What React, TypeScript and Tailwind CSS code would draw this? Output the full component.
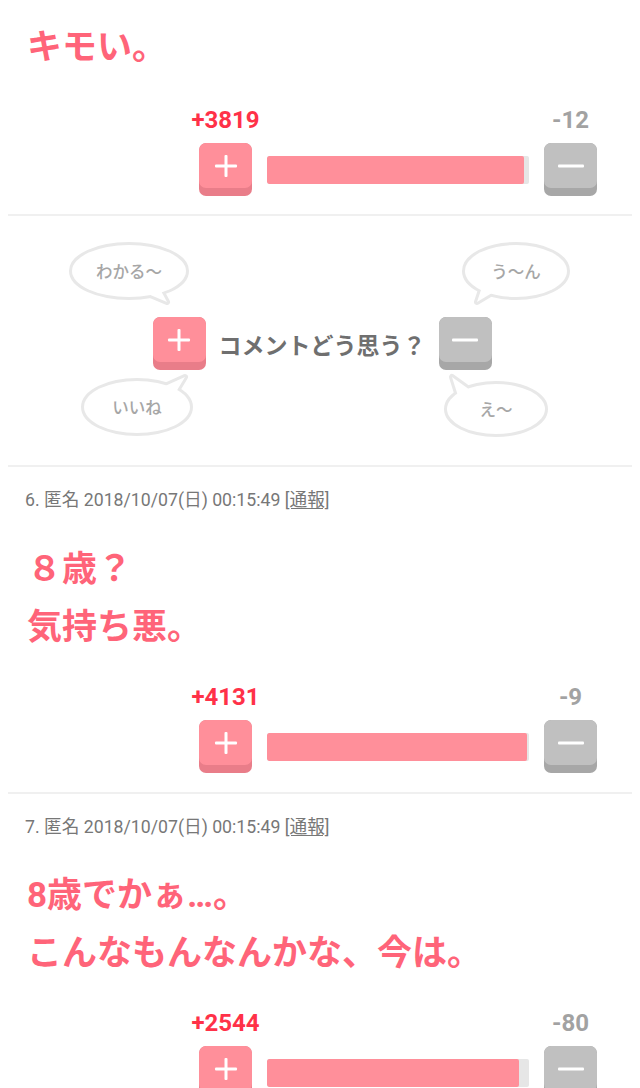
import React from "react";

const PlusIcon = () => (
  <svg width="24" height="24" viewBox="0 0 24 24">
    <rect x="10.5" y="1" width="3" height="22" rx="1" fill="#fff" />
    <rect x="1" y="10.5" width="22" height="3" rx="1" fill="#fff" />
  </svg>
);

const MinusIcon = () => (
  <svg width="26" height="4" viewBox="0 0 26 4">
    <rect x="0" y="0.5" width="26" height="3" rx="1" fill="#fff" />
  </svg>
);

const PlusButton = () => (
  <div className="flex h-[53px] w-[53px] shrink-0 flex-col overflow-hidden rounded-[7px] bg-[#e97d89]">
    <div className="flex h-[45px] items-center justify-center rounded-[7px] bg-[#ff8f9a]">
      <PlusIcon />
    </div>
  </div>
);

const MinusButton = () => (
  <div className="flex h-[53px] w-[53px] shrink-0 flex-col overflow-hidden rounded-[7px] bg-[#a7a7a7]">
    <div className="flex h-[45px] items-center justify-center rounded-[7px] bg-[#c0c0c0]">
      <MinusIcon />
    </div>
  </div>
);

const VoteBar = ({ plus, minus, fill }: { plus: string; minus: string; fill: number }) => (
  <div className="flex justify-end pr-[43px]">
    <div className="w-[398px]">
      <div className="flex h-[24px] justify-between font-['Roboto',sans-serif] text-[24px] font-bold leading-[24px]">
        <div className="flex w-[53px] justify-center whitespace-nowrap text-[#ff3148]">{plus}</div>
        <div className="flex w-[53px] justify-center whitespace-nowrap text-[#a2a2a2]">{minus}</div>
      </div>
      <div className="mt-[11px] flex items-center">
        <PlusButton />
        <div className="mx-[15px] h-[28px] flex-1 overflow-hidden rounded-[2px] bg-[#e6e6e6]">
          <div className="h-full rounded-[2px] bg-[#ff8f9a]" style={{ width: `${fill}px` }} />
        </div>
        <MinusButton />
      </div>
    </div>
  </div>
);

const Divider = ({ className = "" }: { className?: string }) => (
  <div className={`mx-[8px] h-[2px] bg-[#f0f0f0] ${className}`} />
);

type BubbleProps = {
  left: number;
  top: number;
  w: number;
  h: number;
  tail: string;
  text: string;
};

const Bubble = ({ left, top, w, h, tail, text }: BubbleProps) => (
  <div className="absolute" style={{ left, top, width: w, height: h }}>
    <svg className="absolute left-0 top-0 overflow-visible" width={w} height={h} viewBox={`0 0 ${w} ${h}`}>
      <ellipse cx={w / 2} cy={h / 2} rx={w / 2} ry={h / 2} fill="#e8e8e8" stroke="#e8e8e8" strokeWidth="6" />
      <polygon points={tail} fill="#e8e8e8" stroke="#e8e8e8" strokeWidth="6" strokeLinejoin="round" />
      <ellipse cx={w / 2} cy={h / 2} rx={w / 2} ry={h / 2} fill="#fff" />
      <polygon points={tail} fill="#fff" strokeLinejoin="round" />
    </svg>
    <div className="relative flex h-full w-full items-center justify-center font-['Noto_Sans_CJK_JP',sans-serif] text-[16.5px] font-medium text-[#a6a6a6]">
      {text}
    </div>
  </div>
);

const Meta = ({ n }: { n: number }) => (
  <p className="pl-[25px] font-['Roboto','Noto_Sans_CJK_JP',sans-serif] text-[17.7px] leading-[24px] text-[#777]">
    {n}. 匿名 2018/10/07(日) 00:15:49 <span className="underline underline-offset-2">[通報]</span>
  </p>
);

const commentCls =
  "pl-[27px] font-['Roboto','Noto_Sans_CJK_JP',sans-serif] text-[35px] font-bold leading-[58px] text-[#ff6479]";

export default function App() {
  return (
    <div className="min-h-[1088px] w-[640px] overflow-hidden bg-white">
      {/* Section 1 */}
      <div className="pt-[19px]">
        <p className={commentCls}>キモい。</p>
        <div className="mt-[31px]">
          <VoteBar plus="+3819" minus="-12" fill={257} />
        </div>
        <Divider className="mt-[18px]" />
      </div>

      {/* Section 2: prompt */}
      <div className="relative flex h-[249px] items-center justify-center pl-[4px] pt-[6px]">
        <Bubble left={72} top={29} w={114} h={52} tail="76,49 88,44 95,57" text="わかる〜" />
        <Bubble left={465} top={29} w={102} h={52} tail="27,48 17,42 12,57" text="う〜ん" />
        <Bubble left={84} top={165} w={106} h={52} tail="81,5 92,11 101,-4" text="いいね" />
        <Bubble left={447} top={168} w={98} h={50} tail="11,12 23,6 5,-7" text="え〜" />
        <div className="relative flex items-center">
          <PlusButton />
          <span className="ml-[13px] mr-[13px] font-['Noto_Sans_CJK_JP',sans-serif] text-[23px] font-bold leading-[30px] text-[#6f6f6f]">
            コメントどう思う？
          </span>
          <MinusButton />
        </div>
      </div>
      <Divider />

      {/* Section 3 */}
      <div className="pt-[21px]">
        <Meta n={6} />
        <div className={`mt-[29px] ${commentCls}`}>
          <p>８歳？</p>
          <p>気持ち悪。</p>
        </div>
        <div className="mt-[28px]">
          <VoteBar plus="+4131" minus="-9" fill={260} />
        </div>
        <Divider className="mt-[19px]" />
      </div>

      {/* Section 4 */}
      <div className="pt-[21px]">
        <Meta n={7} />
        <div className={`mt-[28px] ${commentCls}`}>
          <p>8歳でかぁ…。</p>
          <p>こんなもんなんかな、今は。</p>
        </div>
        <div className="mt-[28px]">
          <VoteBar plus="+2544" minus="-80" fill={252} />
        </div>
        <Divider className="mt-[19px]" />
      </div>
    </div>
  );
}
